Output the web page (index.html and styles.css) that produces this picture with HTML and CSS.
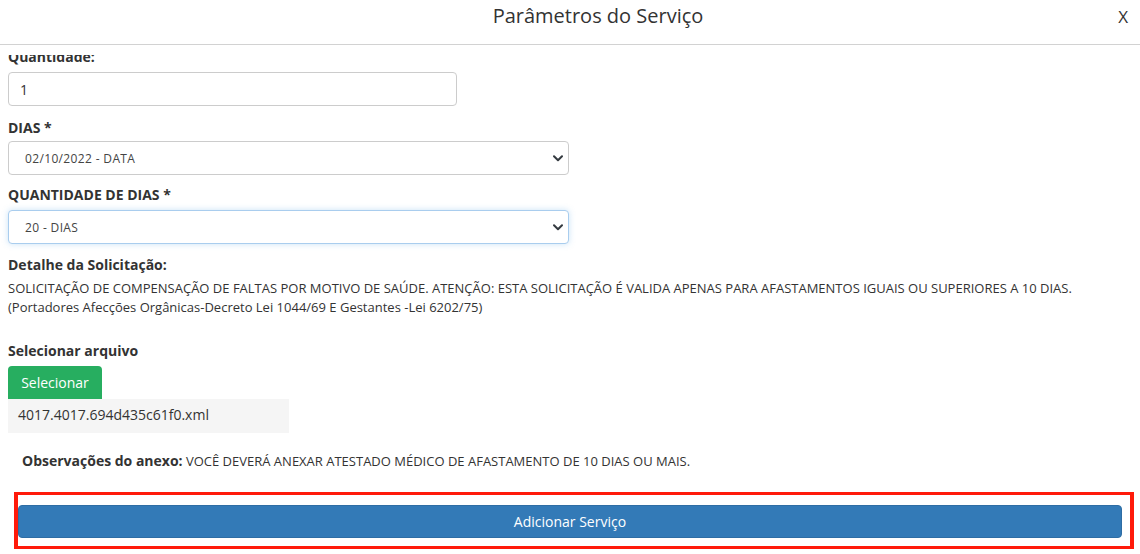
FILE: index.html
```html
<!DOCTYPE html>
<html lang="pt-BR">
<head>
<meta charset="utf-8">
<title>Parâmetros do Serviço</title>
<link rel="stylesheet" href="styles.css">
</head>
<body>
<div class="modal">
  <div class="modal-header">
    <h4 class="modal-title">Parâmetros do Serviço</h4>
    <button class="close" type="button">X</button>
  </div>
  <div class="spacer"></div>
  <div class="modal-body">
    <label class="lbl lbl-qtd">Quantidade:</label>
    <input class="field field-qtd" type="text" value="1">

    <label class="lbl lbl-dias">DIAS *</label>
    <div class="select-wrap">
      <select class="field sel"><option>02/10/2022 - DATA</option></select>
      <svg class="chev" width="10" height="7" viewBox="0 0 10 7"><path d="M1 1.2l4 4 4-4" fill="none" stroke="#343a40" stroke-width="2" stroke-linecap="round" stroke-linejoin="round"/></svg>
    </div>

    <label class="lbl lbl-qdias">QUANTIDADE DE DIAS *</label>
    <div class="select-wrap">
      <select class="field sel focused"><option>20 - DIAS</option></select>
      <svg class="chev" width="10" height="7" viewBox="0 0 10 7"><path d="M1 1.2l4 4 4-4" fill="none" stroke="#343a40" stroke-width="2" stroke-linecap="round" stroke-linejoin="round"/></svg>
    </div>

    <label class="lbl lbl-det">Detalhe da Solicitação:</label>
    <p class="detail">SOLICITAÇÃO DE COMPENSAÇÃO DE FALTAS POR MOTIVO DE SAÚDE. ATENÇÃO: ESTA SOLICITAÇÃO É VALIDA APENAS PARA AFASTAMENTOS IGUAIS OU SUPERIORES A 10 DIAS.<br>(Portadores Afecções Orgânicas-Decreto Lei 1044/69 E Gestantes -Lei 6202/75)</p>

    <label class="lbl lbl-arq">Selecionar arquivo</label>
    <button class="btn-green" type="button">Selecionar</button>
    <div class="file-name">4017.4017.694d435c61f0.xml</div>

    <p class="obs"><strong>Observações do anexo:</strong> VOCÊ DEVERÁ ANEXAR ATESTADO MÉDICO DE AFASTAMENTO DE 10 DIAS OU MAIS.</p>

    <div class="highlight">
      <button class="btn-blue" type="button">Adicionar Serviço</button>
    </div>
  </div>
</div>
</body>
</html>
```
FILE: styles.css
```css
html, body {
  margin: 0;
  padding: 0;
  background: #fff;
}
body {
  font-family: "Open Sans", "DejaVu Sans", sans-serif;
  color: #333;
  width: 1140px;
  height: 554px;
  overflow: hidden;
}
.modal-header {
  position: relative;
  height: 44px;
  border-bottom: 1px solid #d2d2d2;
  display: flex;
  justify-content: center;
  align-items: flex-start;
  padding-left: 56px;
}
.modal-title {
  margin: 0;
  padding-top: 3px;
  font-size: 20px;
  line-height: 26px;
  font-weight: 400;
  color: #333;
}
.close {
  position: absolute;
  right: 12px;
  top: 4px;
  margin: 0;
  padding: 0;
  border: 0;
  background: none;
  font-family: "Open Sans", sans-serif;
  font-size: 17px;
  line-height: 26px;
  color: #333;
}
.spacer {
  height: 10px;
}
.modal-body {
  height: 499px;
  overflow: hidden;
  padding-left: 8px;
  display: flex;
  flex-direction: column;
  align-items: flex-start;
}
.lbl {
  display: block;
  font-size: 14px;
  line-height: 20px;
  font-weight: 700;
  color: #333;
}
.lbl-qtd { margin: -8px 0 5px; }
.lbl-dias { margin: 12px 0 3px; }
.lbl-qdias { margin: 10px 0 5px; }
.lbl-det { margin: 11px 0 4px; }
.lbl-arq { margin: 24px 0 5px; }

.field {
  box-sizing: border-box;
  height: 34px;
  border: 1px solid #ccc;
  border-radius: 4px;
  background: #fff;
  font-family: "Open Sans", sans-serif;
  color: #333;
  margin: 0;
}
.field-qtd {
  width: 449px;
  padding: 0 11px;
  font-size: 14px;
}
.select-wrap {
  position: relative;
  width: 561px;
}
.sel {
  width: 561px;
  appearance: none;
  -webkit-appearance: none;
  padding: 0 30px 0 16px;
  font-size: 12px;
  letter-spacing: 0.35px;
  color: #444;
}
.sel.focused {
  border-color: #a9cdee;
  box-shadow: 0 0 6px rgba(102, 175, 233, 0.35);
  outline: none;
}
.chev {
  position: absolute;
  right: 6px;
  top: 14px;
  pointer-events: none;
}
.detail {
  margin: 0;
  font-size: 13px;
  line-height: 19px;
  color: #333;
}
.btn-green {
  box-sizing: border-box;
  height: 33px;
  width: 94px;
  margin: 0;
  border: 0;
  border-radius: 4px 4px 0 0;
  background: #27ae60;
  color: #fff;
  font-family: "Open Sans", sans-serif;
  font-size: 14px;
  padding: 0;
}
.file-name {
  box-sizing: border-box;
  width: 281px;
  height: 34px;
  padding-left: 10px;
  background: #f5f5f5;
  font-size: 14px;
  line-height: 32px;
  color: #333;
}
.obs {
  margin: 19px 0 0;
  padding-left: 14px;
  font-size: 13px;
  line-height: 17px;
  color: #333;
}
.obs strong {
  font-size: 14px;
}
.highlight {
  box-sizing: border-box;
  margin: 22px 0 0 6px;
  width: 1120px;
  height: 57px;
  border-style: solid;
  border-color: #ff1a0a;
  border-width: 3px 4px;
  padding: 10px 8px 0 0;
}
.btn-blue {
  display: block;
  box-sizing: border-box;
  width: 100%;
  height: 33px;
  margin: 0;
  border: 1px solid #2e6da4;
  border-radius: 4px;
  background: #337ab7;
  color: #fff;
  font-family: "Open Sans", sans-serif;
  font-size: 14px;
  padding: 0;
}
```
